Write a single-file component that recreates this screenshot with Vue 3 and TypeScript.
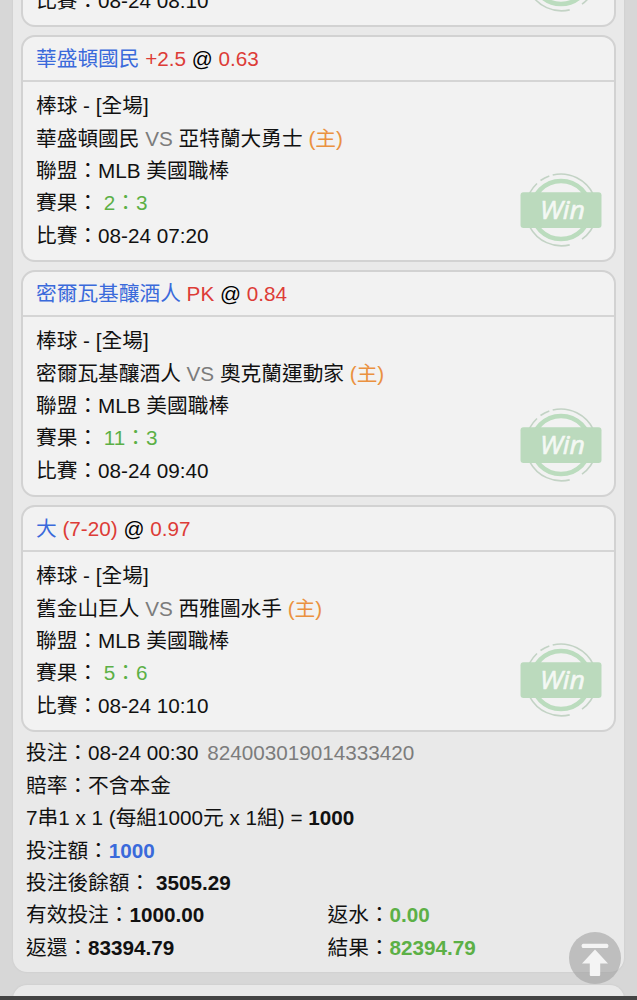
<script setup lang="ts">
interface Bet {
  id: number
  pick: string
  line: string
  odds: string
  home: string
  away: string
  score: string
  time: string
}

const previousTime = '08-24 08:10'

const bets: Bet[] = [
  { id: 1, pick: '華盛頓國民', line: '+2.5', odds: '0.63', away: '華盛頓國民', home: '亞特蘭大勇士', score: '2：3', time: '08-24 07:20' },
  { id: 2, pick: '密爾瓦基釀酒人', line: 'PK', odds: '0.84', away: '密爾瓦基釀酒人', home: '奧克蘭運動家', score: '11：3', time: '08-24 09:40' },
  { id: 3, pick: '大', line: '(7-20)', odds: '0.97', away: '舊金山巨人', home: '西雅圖水手', score: '5：6', time: '08-24 10:10' },
]
</script>

<template>
  <div class="screen">
    <svg width="0" height="0" class="defs">
      <symbol id="win-stamp" viewBox="-42 -38 84 76">
        <g fill="none" stroke="#c3d3c5" stroke-width="1.6">
          <path d="M-8.3 -35 A36 36 0 0 1 21 29.2" />
          <path d="M8.7 34.9 A36 36 0 0 1 -24 -26.5" />
          <path d="M-20.5 -29.5 A36 36 0 0 1 -11.7 -34" />
        </g>
        <circle r="29" fill="none" stroke="#bbdcbe" stroke-width="4.6" />
        <rect x="-40.5" y="-17.7" width="81" height="35.6" rx="3" fill="#bbdabd" />
        <text x="-21" y="9" textLength="45" lengthAdjust="spacingAndGlyphs" class="stamp-text">Win</text>
      </symbol>
    </svg>

    <main class="sheet">
      <section class="card tail">
        <div class="body">
          <p>比賽：{{ previousTime }}</p>
        </div>
        <svg class="stamp"><use href="#win-stamp" /></svg>
      </section>

      <section v-for="bet in bets" :key="bet.id" class="card">
        <header class="head">
          <span class="blue">{{ bet.pick }}</span>&nbsp;<span class="red">{{ bet.line }}</span>&nbsp;<span class="at">@</span>&nbsp;<span class="red">{{ bet.odds }}</span>
        </header>
        <div class="body">
          <p>棒球 - [全場]</p>
          <p>{{ bet.away }} <span class="gray">VS</span> {{ bet.home }} <span class="orange">(主)</span></p>
          <p>聯盟：MLB 美國職棒</p>
          <p>賽果： <span class="green">{{ bet.score }}</span></p>
          <p>比賽：{{ bet.time }}</p>
        </div>
        <svg class="stamp"><use href="#win-stamp" /></svg>
      </section>

      <footer class="summary">
        <p>投注：08-24 00:30 <span class="gray serial">824003019014333420</span></p>
        <p>賠率：不含本金</p>
        <p>7串1 x 1 (每組1000元 x 1組) = <b>1000</b></p>
        <p>投注額：<b class="blue">1000</b></p>
        <p>投注後餘額： <b>3505.29</b></p>
        <div class="pair">
          <p>有效投注：<b>1000.00</b></p>
          <p>返水：<b class="green">0.00</b></p>
        </div>
        <div class="pair">
          <p>返還：<b>83394.79</b></p>
          <p>結果：<b class="green">82394.79</b></p>
        </div>
      </footer>
    </main>

    <div class="sheet next"></div>
    <div class="bar"></div>

    <button class="to-top" type="button" aria-label="Top">
      <svg width="52" height="52" viewBox="0 0 52 52">
        <circle cx="26" cy="26" r="26" fill="#9f9f9f" fill-opacity=".58" />
        <rect x="12.7" y="11.7" width="26.6" height="4.4" rx="1.6" fill="#f4f4f4" />
        <path d="M26 17.6 L39 31.6 H31.2 V43 Q31.2 44 30.2 44 H21.8 Q20.8 44 20.8 43 V31.6 H13 Z" fill="#f4f4f4" />
      </svg>
    </button>
  </div>
</template>

<style>
body {
  background: #d7d7d7;
}
</style>

<style scoped>
.screen {
  position: relative;
  box-sizing: border-box;
  width: 637px;
  height: 1000px;
  overflow: hidden;
  display: flex;
  flex-direction: column;
  padding: 0 13px;
  background: #d7d7d7;
  color: #111;
  font: 20.7px/32.42px "Liberation Sans", "Noto Sans CJK TC", sans-serif;
  white-space: nowrap;
}
.defs {
  position: absolute;
}
p {
  margin: 0;
  height: 32.42px;
}
.sheet {
  box-sizing: border-box;
  flex: none;
  height: 1172px;
  margin-top: -200px;
  padding: 0 8.5px;
  border-radius: 14px;
  background: #e9e9e9;
  box-shadow: 0 0 2px #c4c4c4;
  display: flex;
  flex-direction: column;
}
.card {
  position: relative;
  box-sizing: border-box;
  flex: none;
  height: 227px;
  margin: 0 0 8px -0.5px;
  border: 2px solid #d2d2d2;
  border-radius: 14px;
  background: #f2f2f2;
}
.tail {
  display: flex;
  align-items: flex-end;
}
.head {
  box-sizing: border-box;
  height: 44.5px;
  padding: 5.5px 13px 0;
  border-bottom: 2px solid #d5d5d5;
}
.at {
  color: #000;
}
.body {
  padding: 8.7px 13px 0;
}
.tail .body {
  padding-bottom: 7.5px;
}
.stamp {
  position: absolute;
  right: 11px;
  bottom: 12px;
  width: 84px;
  height: 76px;
}
.stamp-text {
  fill: #f4f8f4;
  stroke: #f4f8f4;
  stroke-width: 0.6px;
  font-family: "Open Sans", "Noto Sans", sans-serif;
  font-size: 26px;
  font-style: italic;
  font-weight: 400;
}
.summary {
  padding: 0 4.5px;
  margin-top: -2.6px;
}
.serial {
  margin-left: 3px;
}
.pair {
  display: grid;
  grid-template-columns: 301.5px 1fr;
}
.blue {
  color: #3a6adb;
}
.red {
  color: #dd3c37;
}
.green {
  color: #5cb046;
}
.orange {
  color: #ea9140;
}
.gray {
  color: #7c7c7c;
}
.next {
  height: 60px;
  margin-top: 13px;
}
.bar {
  position: absolute;
  left: 0;
  right: 0;
  bottom: 0;
  height: 4px;
  background: #434343;
}
.to-top {
  position: absolute;
  left: 569px;
  top: 932px;
  width: 52px;
  height: 52px;
  padding: 0;
  border: 0;
  background: none;
}
.to-top svg {
  display: block;
}
</style>
